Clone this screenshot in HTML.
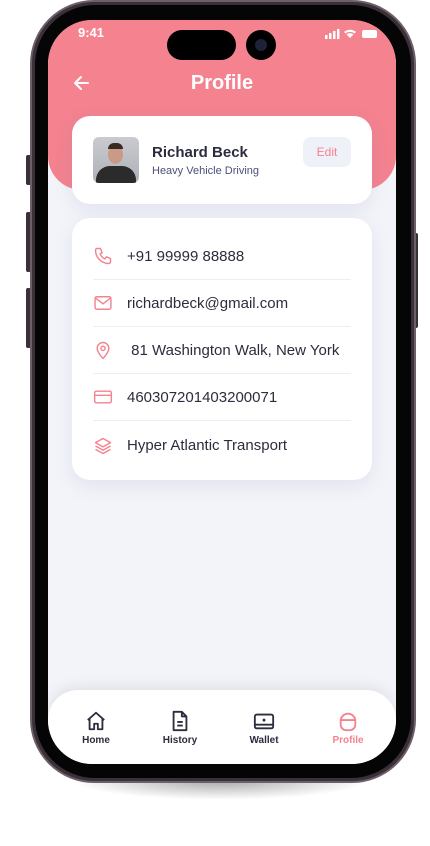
<!DOCTYPE html>
<html><head><meta charset="utf-8"><style>
*{margin:0;padding:0;box-sizing:border-box}
body{width:430px;height:846px;background:#fff;position:relative;overflow:hidden;font-family:"Liberation Sans",sans-serif}
.shadow{position:absolute;left:70px;top:760px;width:300px;height:40px;border-radius:50%;background:radial-gradient(ellipse at center,rgba(0,0,0,.35),rgba(0,0,0,0) 70%)}
.frame{position:absolute;left:30px;top:0;width:386px;height:783px;border-radius:64px;background:#3a3038;border:2px solid #6b5f69}
.bezel{position:absolute;left:35px;top:5px;width:376px;height:773px;border-radius:60px;background:#050505}
.btn{position:absolute;background:#3a3038;border-radius:2px}
.screen{position:absolute;left:48px;top:20px;width:348px;height:744px;border-radius:44px;background:#f3f4f9;overflow:hidden}
.head{position:absolute;left:0;top:0;width:348px;height:170px;background:#f4828f;border-radius:0 0 34px 34px}
.island{position:absolute;left:119px;top:10px;width:69px;height:30px;border-radius:15px;background:#000}
.cam{position:absolute;left:198px;top:10px;width:30px;height:30px;border-radius:50%;background:#000}
.cam:after{content:"";position:absolute;left:9px;top:9px;width:12px;height:12px;border-radius:50%;background:#1e2238}
.time{position:absolute;left:30px;top:5px;color:#fff;font-size:13px;font-weight:bold}
.title{position:absolute;left:0;width:348px;top:52px;text-align:center;color:#fff;font-size:20px;font-weight:bold}
.card{position:absolute;background:#fff;border-radius:18px;box-shadow:0 6px 18px rgba(120,130,180,.15)}
.row{position:absolute;left:21px;width:258px;height:47px;display:flex;align-items:center;border-bottom:1px solid #eaeef6;color:#2b2d3e;font-size:15px}
.row svg{margin-right:14px;flex:none}
.nav{position:absolute;left:0;top:670px;width:348px;height:74px;background:#fff;border-radius:30px 30px 0 0;box-shadow:0 -4px 14px rgba(0,0,0,.08)}
.it{position:absolute;top:20px;width:70px;text-align:center;font-size:10px;font-weight:bold;color:#2b2d3e}
.it svg{display:block;margin:0 auto 3px}
</style></head><body>
<div class="shadow"></div>
<div class="btn" style="left:26px;top:155px;width:5px;height:30px"></div>
<div class="btn" style="left:26px;top:212px;width:5px;height:60px"></div>
<div class="btn" style="left:26px;top:288px;width:5px;height:60px"></div>
<div class="btn" style="left:413px;top:233px;width:5px;height:95px"></div>
<div class="frame"></div>
<div class="bezel"></div>
<div class="screen">
 <div class="head"></div>
 <div class="time">9:41</div>
 <div class="island"></div><div class="cam"></div>
 <svg style="position:absolute;left:277px;top:8px" width="54" height="12" viewBox="0 0 54 12"><g fill="#fff"><rect x="0" y="7" width="2.5" height="4"/><rect x="4" y="5" width="2.5" height="6"/><rect x="8" y="3" width="2.5" height="8"/><rect x="12" y="1" width="2.5" height="10"/><path d="M19 4a9 9 0 0 1 12 0l-1.5 1.5a7 7 0 0 0-9 0zM21.5 6.5a5 5 0 0 1 7 0L25 10z"/><rect x="37" y="2" width="15" height="8" rx="2"/></g></svg>
 <svg style="position:absolute;left:25px;top:55px" width="16" height="16" viewBox="0 0 16 16"><path d="M15 8H2M8 2L2 8l6 6" stroke="#fff" stroke-width="2" fill="none" stroke-linecap="round" stroke-linejoin="round"/></svg>
 <div class="title">Profile</div>
 <div class="card" style="left:24px;top:96px;width:300px;height:88px">
  <div style="position:absolute;left:21px;top:21px;width:46px;height:46px;border-radius:6px;background:linear-gradient(#c9cbd0,#aeb1b7);overflow:hidden">
   <div style="position:absolute;left:15px;top:8px;width:15px;height:19px;border-radius:50%;background:#c99a85"></div>
   <div style="position:absolute;left:15px;top:6px;width:15px;height:6px;border-radius:6px 6px 0 0;background:#3b2a22"></div>
   <div style="position:absolute;left:3px;top:29px;width:40px;height:24px;border-radius:14px 14px 0 0;background:#2b2b2b"></div>
  </div>
  <div style="position:absolute;left:80px;top:28px;font-size:15px;font-weight:bold;color:#2b2d3e">Richard Beck</div>
  <div style="position:absolute;left:80px;top:49px;font-size:11px;color:#4b5176">Heavy Vehicle Driving</div>
  <div style="position:absolute;left:231px;top:21px;width:48px;height:30px;border-radius:8px;background:#eef1f8;color:#f4828f;font-size:12px;text-align:center;line-height:30px">Edit</div>
 </div>
 <div class="card" style="left:24px;top:198px;width:300px;height:262px">
  <div class="row" style="top:15px"><svg width="20" height="20" viewBox="0 0 24 24" fill="none" stroke="#f4828f" stroke-width="1.7" stroke-linejoin="round"><path d="M5 3h4l2 5-2.5 1.5a11 11 0 0 0 6 6L16 13l5 2v4a2 2 0 0 1-2 2A16 16 0 0 1 3 5a2 2 0 0 1 2-2"/></svg>+91 99999 88888</div>
  <div class="row" style="top:62px"><svg width="20" height="20" viewBox="0 0 24 24" fill="none" stroke="#f4828f" stroke-width="1.7"><rect x="2.5" y="4.5" width="19" height="15" rx="2"/><path d="M3 6l9 7 9-7"/></svg>richardbeck@gmail.com</div>
  <div class="row" style="top:109px"><svg width="20" height="20" viewBox="0 0 24 24" fill="none" stroke="#f4828f" stroke-width="1.7"><path d="M12 22s7-7 7-12a7 7 0 0 0-14 0c0 5 7 12 7 12z"/><circle cx="12" cy="10" r="2.5"/></svg>&nbsp;81 Washington Walk, New York</div>
  <div class="row" style="top:156px"><svg width="20" height="20" viewBox="0 0 24 24" fill="none" stroke="#f4828f" stroke-width="1.7"><rect x="2" y="5" width="20" height="14" rx="2"/><path d="M2 10h20"/></svg>460307201403200071</div>
  <div class="row" style="top:204px;border:0"><svg width="20" height="20" viewBox="0 0 24 24" fill="none" stroke="#f4828f" stroke-width="1.7" stroke-linejoin="round"><path d="M12 3l9 5-9 5-9-5zM3 12l9 5 9-5M3 16l9 5 9-5"/></svg>Hyper Atlantic Transport</div>
 </div>
 <div class="nav">
  <div class="it" style="left:13px"><svg width="22" height="22" viewBox="0 0 24 24" fill="none" stroke="#2b2d3e" stroke-width="2" stroke-linejoin="round"><path d="M3 11l9-8 9 8M5 9v12h5v-6h4v6h5V9"/></svg>Home</div>
  <div class="it" style="left:97px"><svg width="22" height="22" viewBox="0 0 24 24" fill="none" stroke="#2b2d3e" stroke-width="2" stroke-linejoin="round"><path d="M5 2h9l5 5v15H5zM14 2v5h5M9 13h6M9 17h6"/></svg>History</div>
  <div class="it" style="left:181px"><svg width="22" height="22" viewBox="0 0 24 24" fill="none" stroke="#2b2d3e" stroke-width="2"><rect x="2" y="5" width="20" height="15" rx="2"/><path d="M2 16h20"/><circle cx="12" cy="11" r=".6" fill="#2b2d3e"/></svg>Wallet</div>
  <div class="it" style="left:265px;color:#f4828f"><svg width="22" height="22" viewBox="0 0 24 24" fill="none" stroke="#f4828f" stroke-width="2"><path d="M4 12a8 8 0 0 1 16 0v4a6 6 0 0 1-6 6h-4a6 6 0 0 1-6-6z"/><path d="M4 11h16"/></svg>Profile</div>
 </div>
</div>
</body></html>
